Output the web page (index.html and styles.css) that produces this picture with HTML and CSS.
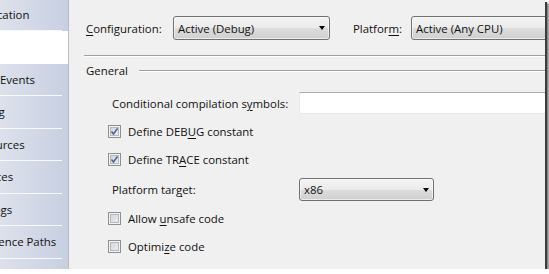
FILE: index.html
```html
<!DOCTYPE html>
<html lang="en">
<head>
    <meta charset="UTF-8">
    <title>Build - Project Properties</title>
    <link rel="stylesheet" href="styles.css">
</head>
<body>

    <div class="window">

        <nav class="sidebar">
            <ul class="tabs">
                <li>Application</li>
                <li class="selected">Build</li>
                <li>Build Events</li>
                <li>Debug</li>
                <li>Resources</li>
                <li>Services</li>
                <li>Settings</li>
                <li>Reference Paths</li>
            </ul>
        </nav>

        <div class="page">

            <div class="toolbar">
                <label class="config-label"><u>C</u>onfiguration:</label>
                <div class="combo config-combo">Active (Debug)<span class="arrow"></span></div>
                <label class="platform-label">Platfor<u>m</u>:</label>
                <div class="combo platform-combo">Active (Any CPU)<span class="arrow"></span></div>
            </div>

            <div class="rule"></div>

            <div class="group-title">
                <span>General</span>
                <span class="group-line"></span>
            </div>

            <div class="row symbols-row">
                <label class="row-label">Conditional compilation s<u>y</u>mbols:</label>
                <div class="textbox"></div>
            </div>

            <div class="row check-row debug-row">
                <span class="checkbox checked"></span>
                <label>Define DEB<u>U</u>G constant</label>
            </div>

            <div class="row check-row">
                <span class="checkbox checked"></span>
                <label>Define TR<u>A</u>CE constant</label>
            </div>

            <div class="row target-row">
                <label class="row-label">Platform tar<u>g</u>et:</label>
                <div class="combo target-combo">x86<span class="arrow"></span></div>
            </div>

            <div class="row check-row unsafe-row">
                <span class="checkbox"></span>
                <label>Allow <u>u</u>nsafe code</label>
            </div>

            <div class="row check-row">
                <span class="checkbox"></span>
                <label>Optimi<u>z</u>e code</label>
            </div>

        </div>
    </div>

</body>
</html>
```

FILE: styles.css
```css
body {
    margin: 0;
    background-color: #fff;
    font-size: 11.4px;
    font-family: "Open Sans", "Noto Sans", sans-serif;
    color: #111;
}

.window {
    display: flex;
    width: 545px;
    height: 269px;
    overflow: hidden;
    box-shadow: 2px 2px 0 #3c3c3c, 4px 3px 2px rgba(0,0,0,0.5);
}

/* left tab strip */

.sidebar {
    width: 68px;
    flex: none;
    overflow: hidden;
    border-right: 1px solid #b9bdc6;
    background: linear-gradient(to right, #dce1eb, #c8cfe1);
}

.tabs {
    list-style: none;
    margin: -1.5px 0 0 -30px;
    padding: 0;
}

.tabs li {
    height: 31.5px;
    line-height: 31.5px;
    padding-bottom: 1px;
    white-space: nowrap;
    background: linear-gradient(#f8f9fc, #f8f9fc) no-repeat left bottom / 92px 1px;
}

.tabs li.selected {
    background: #fff;
}

/* property page */

.page {
    flex: 1;
    min-width: 0;
    background-color: #f0f0f0;
    padding-left: 15px;
}

.toolbar {
    display: flex;
    align-items: center;
    height: 24px;
    margin-top: 16px;
    padding-left: 2px;
    white-space: nowrap;
}

.config-label {
    width: 87px;
    flex: none;
}

.platform-label {
    width: 58px;
    flex: none;
    margin-left: 23px;
}

.combo {
    display: flex;
    align-items: center;
    justify-content: space-between;
    box-sizing: border-box;
    flex: none;
    padding: 0 4px 0 4px;
    border: 1px solid #707070;
    border-radius: 3px;
    background: linear-gradient(#f3f3f3, #ebebeb 50%, #dddddd 51%, #cfcfcf);
    box-shadow: inset 0 0 0 1px rgba(255,255,255,0.6);
    white-space: nowrap;
}

.config-combo {
    width: 157px;
    height: 24px;
}

.platform-combo {
    width: 180px;
    height: 24px;
}

.arrow {
    width: 0;
    height: 0;
    border-left: 3.5px solid transparent;
    border-right: 3.5px solid transparent;
    border-top: 4px solid #000;
}

.rule {
    margin-top: 15px;
    height: 1px;
    background-color: #a0a0a0;
    border-bottom: 1px solid #fff;
}

.group-title {
    display: flex;
    align-items: center;
    height: 26px;
    padding-left: 2px;
}

.group-line {
    flex: 1;
    height: 1px;
    margin-left: 11px;
    margin-top: 1px;
    background-color: #a0a0a0;
    border-bottom: 1px solid #fff;
}

.row {
    display: flex;
    align-items: center;
    white-space: nowrap;
}

.row-label {
    width: 187px;
    flex: none;
    padding-left: 28px;
}

.symbols-row {
    height: 22px;
    margin-top: 9px;
}

.textbox {
    flex: none;
    width: 260px;
    height: 22px;
    box-sizing: border-box;
    background-color: #fff;
    border: 1px solid #e3e9ef;
    border-top-color: #abadb3;
}

.check-row {
    height: 27.5px;
    padding-left: 24px;
}

.debug-row {
    margin-top: 3.75px;
}

.target-row {
    height: 23px;
    margin-top: 5.25px;
}

.target-combo {
    width: 135px;
    height: 23px;
}

.unsafe-row {
    height: 28px;
    margin-top: 3px;
}

.unsafe-row + .check-row {
    height: 28px;
}

.checkbox {
    width: 13px;
    height: 13px;
    box-sizing: border-box;
    flex: none;
    margin-right: 7px;
    border: 1px solid #8e8f8f;
    background: linear-gradient(135deg, #cbcfd5, #f4f5f6);
    box-shadow: inset 0 0 0 1px #f4f4f4, inset 0 0 0 2px #b4b8be;
}

.checkbox.checked {
    background:
        url("data:image/svg+xml,%3Csvg xmlns='http://www.w3.org/2000/svg' width='11' height='11'%3E%3Cpath d='M2.5 5.5 L4.5 8 L8.5 2.5' fill='none' stroke='%234d5f8f' stroke-width='1.5'/%3E%3C/svg%3E") no-repeat center,
        linear-gradient(135deg, #cbcfd5, #f4f5f6);
}

u {
    text-decoration-thickness: 1px;
    text-underline-offset: 2px;
}
```
